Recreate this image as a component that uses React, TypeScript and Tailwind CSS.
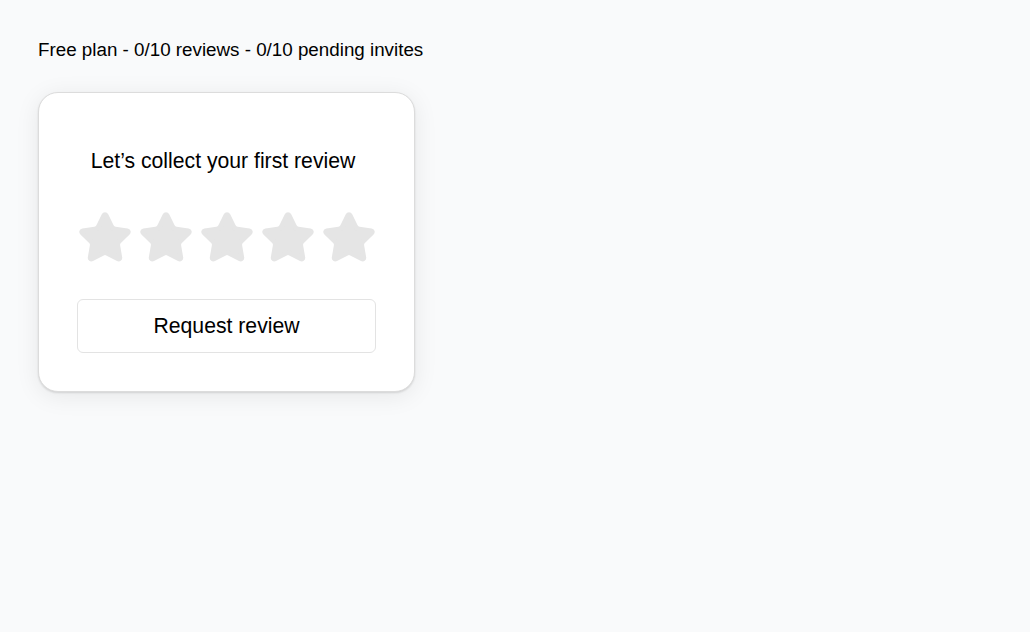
import React from "react";

const StarIcon = () => (
  <svg width="56" height="56" viewBox="0 0 24 24" fill="#e5e5e5" stroke="#e5e5e5" strokeWidth="2" strokeLinejoin="round" strokeLinecap="round">
    <path d="M11.525 2.295a.53.53 0 0 1 .95 0l2.31 4.679a2.123 2.123 0 0 0 1.595 1.16l5.166.756a.53.53 0 0 1 .294.904l-3.736 3.638a2.123 2.123 0 0 0-.611 1.878l.882 5.14a.53.53 0 0 1-.771.56l-4.618-2.428a2.122 2.122 0 0 0-1.973 0L6.396 21.010a.53.53 0 0 1-.77-.56l.881-5.139a2.122 2.122 0 0 0-.611-1.879L2.16 9.795a.53.53 0 0 1 .294-.906l5.165-.755a2.122 2.122 0 0 0 1.597-1.16z" />
  </svg>
);

export default function App() {
  return (
    <div className="min-h-screen w-full bg-[#f9fafb] px-[38px] pt-[39px] text-black" style={{ fontFamily: '"Liberation Sans", Arial, sans-serif' }}>
      <div className="text-[18.8px] leading-[22px]">Free plan - 0/10 reviews - 0/10 pending invites</div>
      <div className="mt-[31px] flex w-[377px] flex-col items-center rounded-[20px] border border-[#dcdcdc] bg-white px-[37px] pt-[56px] pb-[38px] shadow-[0_1px_2px_rgba(0,0,0,0.12),0_4px_24px_rgba(0,0,0,0.08)]">
        <div className="mr-[7px] text-[21.2px] leading-[24px]">Let’s collect your first review</div>
        <div className="mt-[37px] flex gap-[5px]">
          <StarIcon />
          <StarIcon />
          <StarIcon />
          <StarIcon />
          <StarIcon />
        </div>
        <button className="mt-[33px] flex h-[54px] w-[299px] items-center justify-center rounded-[6px] border border-[#e3e3e3] bg-white text-[21.2px] text-black">
          Request review
        </button>
      </div>
    </div>
  );
}
